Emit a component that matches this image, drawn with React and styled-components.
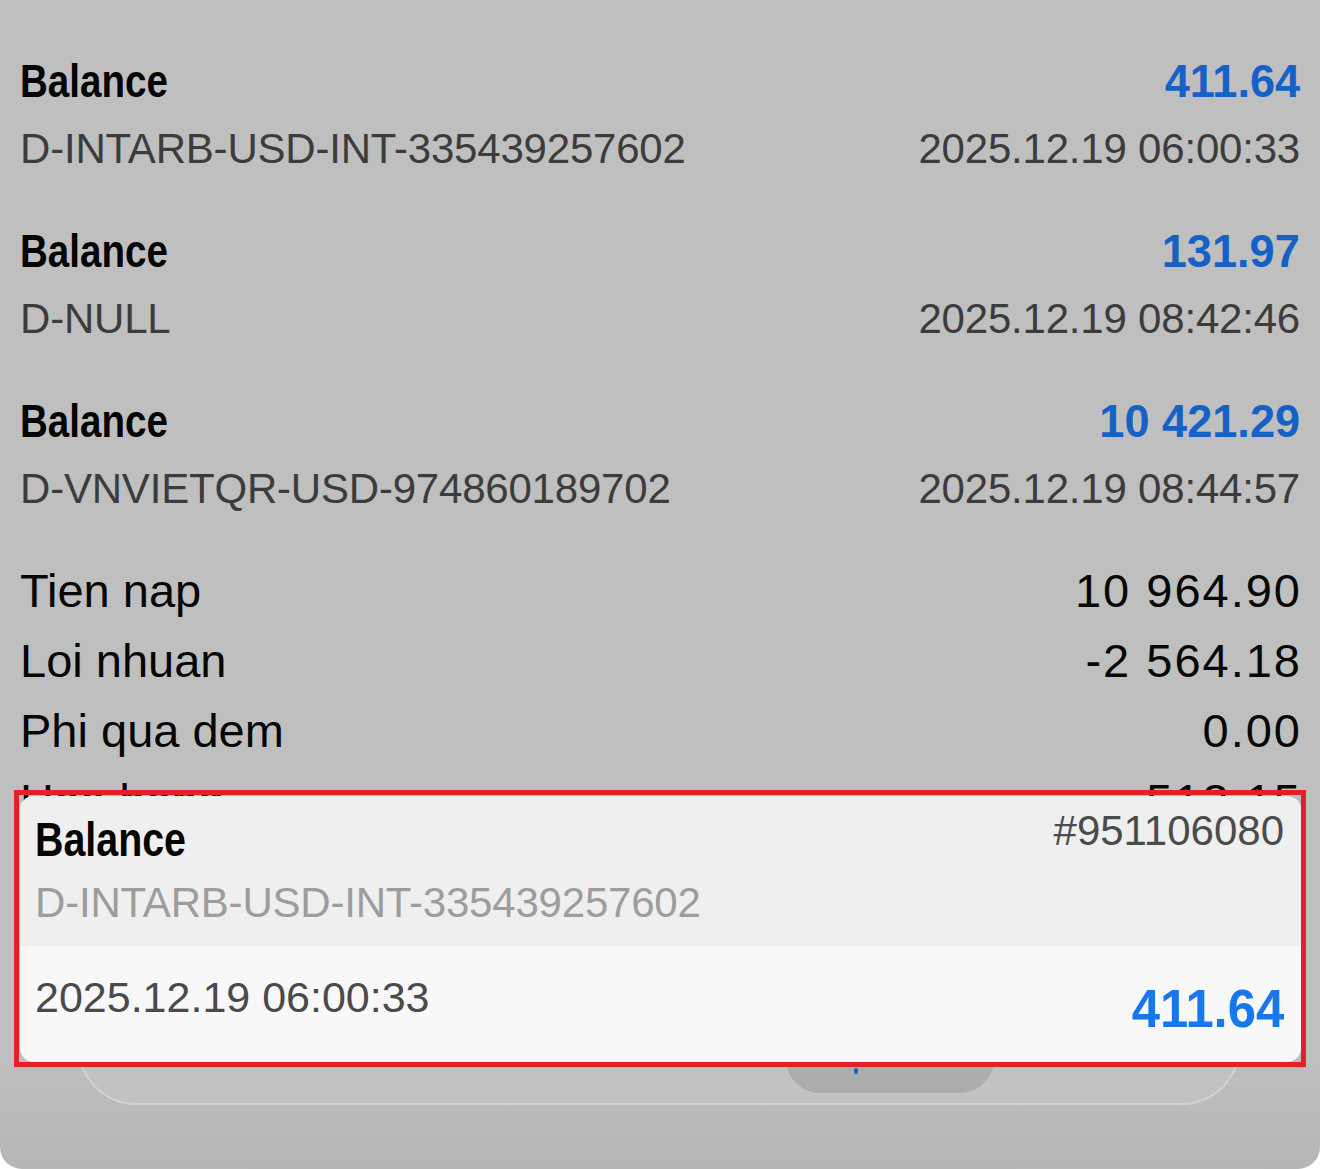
import styled, { createGlobalStyle } from "styled-components";

const GlobalStyle = createGlobalStyle`
  html, body {
    margin: 0;
    padding: 0;
    background: #ffffff;
  }
`;

const SANS = `"Liberation Sans", Arial, sans-serif`;

const StyledScreen = styled.div`
  position: relative;
  width: 1320px;
  height: 1169px;
  box-sizing: border-box;
  padding: 48px 20px 0;
  overflow: hidden;
  border-radius: 0 0 22px 22px;
  background: linear-gradient(
    to bottom,
    #bfbfbf 0,
    #bfbfbf 1050px,
    #b6b6b6 1169px
  );
`;

const StyledRow = styled.div`
  display: flex;
  justify-content: space-between;
  margin-bottom: 34px;
`;

const StyledColumn = styled.div`
  display: flex;
  flex-direction: column;
  align-items: ${(p) => (p.$right ? "flex-end" : "flex-start")};
`;

// condensed bold face: squeeze a regular bold horizontally
const StyledTitle = styled.div`
  display: inline-block;
  font-family: ${SANS};
  font-weight: 700;
  font-size: ${(p) => p.$size || 47}px;
  line-height: 66px;
  color: #050505;
  transform: scaleX(0.82);
  transform-origin: left center;
`;

const StyledAmount = styled.div`
  display: inline-block;
  font-family: ${SANS};
  font-weight: 700;
  font-size: ${(p) => p.$size || 47}px;
  line-height: ${(p) => p.$size || 66}px;
  color: ${(p) => p.$color || "#1561c6"};
  transform: scaleX(${(p) => p.$scale || 0.96});
  transform-origin: right center;
`;

const StyledSub = styled.div`
  font-family: ${SANS};
  font-size: 42px;
  line-height: 70px;
  letter-spacing: -0.2px;
  color: ${(p) => p.$color || "#3c3c3c"};
  white-space: nowrap;
`;

const StyledSummary = styled.div`
  margin-top: -2px;
`;

const StyledSummaryRow = styled.div`
  display: flex;
  justify-content: space-between;
  font-family: ${SANS};
  font-size: 47px;
  line-height: 70px;
  color: #070707;
`;

const StyledNumber = styled.span`
  letter-spacing: 2px;
  margin-right: -2px;
`;

const StyledTabBar = styled.div`
  position: absolute;
  left: 78px;
  right: 80px;
  bottom: 64px;
  height: 130px;
  box-sizing: border-box;
  border: 2px solid #d2d2d2;
  border-radius: 58px;
  background: #c2c2c2;
  display: flex;
  align-items: flex-end;
  padding: 0 0 10px 706px;
`;

const StyledTabPill = styled.div`
  width: 208px;
  height: 70px;
  border-radius: 0 0 34px 34px;
  background: #adadad;
  display: flex;
  align-items: flex-end;
  padding: 0 0 19px 68px;
  box-sizing: border-box;
`;

const StyledDot = styled.span`
  width: 4px;
  height: 6px;
  border-radius: 2px;
  background: #1a63c4;
`;

const StyledFrame = styled.div`
  position: absolute;
  left: 14px;
  top: 790px;
  width: 1292px;
  height: 277px;
  box-sizing: border-box;
  border: 5px solid #e2202a;
  padding: 1px 0 0 1px;
  display: flex;
`;

const StyledCard = styled.div`
  flex: 1;
  display: flex;
  flex-direction: column;
  border-radius: 14px;
  overflow: hidden;
  background: #f8f8f8;
`;

const StyledCardTop = styled.div`
  height: 150px;
  box-sizing: border-box;
  padding: 11px 17px 0 15px;
  background: #efefef;
`;

const StyledCardHead = styled.div`
  display: flex;
  justify-content: space-between;
  align-items: flex-start;
`;

const StyledTicket = styled.div`
  font-family: ${SANS};
  font-size: 42px;
  line-height: 47px;
  color: #4b4b4b;
`;

const StyledCardBottom = styled.div`
  flex: 1;
  display: flex;
  justify-content: space-between;
  align-items: flex-start;
  padding: 27px 17px 0 15px;
`;

const StyledDate = styled.div`
  font-family: ${SANS};
  font-size: 43px;
  line-height: 48px;
  color: #4a4a4a;
`;

const deals = [
  {
    comment: "D-INTARB-USD-INT-335439257602",
    amount: "411.64",
    time: "2025.12.19 06:00:33",
  },
  { comment: "D-NULL", amount: "131.97", time: "2025.12.19 08:42:46" },
  {
    comment: "D-VNVIETQR-USD-974860189702",
    amount: "10 421.29",
    time: "2025.12.19 08:44:57",
  },
];

const totals = [
  ["Tien nap", "10 964.90"],
  ["Loi nhuan", "-2 564.18"],
  ["Phi qua dem", "0.00"],
  ["Hoa hong", "513.15"],
];

const App = () => {
  return (
    <StyledScreen>
      <GlobalStyle />
      {deals.map((d) => (
        <StyledRow key={d.comment}>
          <StyledColumn>
            <StyledTitle>Balance</StyledTitle>
            <StyledSub>{d.comment}</StyledSub>
          </StyledColumn>
          <StyledColumn $right>
            <StyledAmount>{d.amount}</StyledAmount>
            <StyledSub>{d.time}</StyledSub>
          </StyledColumn>
        </StyledRow>
      ))}
      <StyledSummary>
        {totals.map(([label, value]) => (
          <StyledSummaryRow key={label}>
            <span>{label}</span>
            <StyledNumber>{value}</StyledNumber>
          </StyledSummaryRow>
        ))}
      </StyledSummary>

      <StyledTabBar>
        <StyledTabPill>
          <StyledDot />
        </StyledTabPill>
      </StyledTabBar>

      <StyledFrame>
        <StyledCard>
          <StyledCardTop>
            <StyledCardHead>
              <StyledTitle $size={48}>Balance</StyledTitle>
              <StyledTicket>#951106080</StyledTicket>
            </StyledCardHead>
            <StyledSub $color="#9d9d9d" style={{ lineHeight: "60px" }}>
              D-INTARB-USD-INT-335439257602
            </StyledSub>
          </StyledCardTop>
          <StyledCardBottom>
            <StyledDate>2025.12.19 06:00:33</StyledDate>
            <StyledAmount
              $size={54}
              $scale={0.94}
              $color="#1877ea"
              style={{ marginTop: 8 }}
            >
              411.64
            </StyledAmount>
          </StyledCardBottom>
        </StyledCard>
      </StyledFrame>
    </StyledScreen>
  );
};

export default App;
